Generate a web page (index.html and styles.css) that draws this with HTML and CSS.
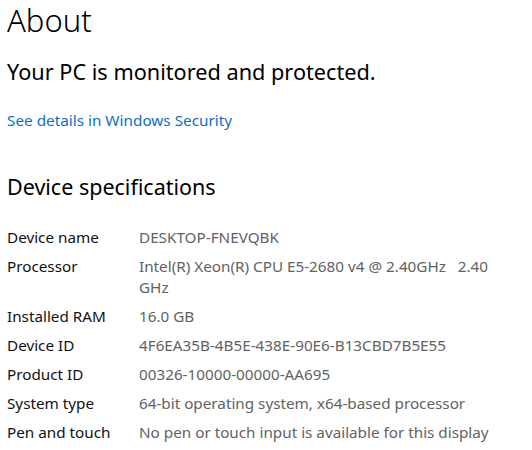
FILE: index.html
```html
<!DOCTYPE html>
<html lang="en">
<head>
<meta charset="utf-8">
<title>About</title>
<link rel="stylesheet" href="styles.css">
</head>
<body>
<main class="page">
  <h1 class="title">About</h1>
  <p class="status">Your PC is monitored and protected.</p>
  <a class="link" href="#">See details in Windows Security</a>
  <h2 class="section">Device specifications</h2>
  <dl class="specs">
    <dt>Device name</dt><dd>DESKTOP-FNEVQBK</dd>
    <dt>Processor</dt><dd class="pre">Intel(R) Xeon(R) CPU E5-2680 v4 @ 2.40GHz   2.40 GHz</dd>
    <dt>Installed RAM</dt><dd>16.0 GB</dd>
    <dt>Device ID</dt><dd>4F6EA35B-4B5E-438E-90E6-B13CBD7B5E55</dd>
    <dt>Product ID</dt><dd>00326-10000-00000-AA695</dd>
    <dt>System type</dt><dd>64-bit operating system, x64-based processor</dd>
    <dt>Pen and touch</dt><dd>No pen or touch input is available for this display</dd>
  </dl>
</main>
</body>
</html>
```

FILE: styles.css
```css
html, body {
  margin: 0;
  padding: 0;
  background: #ffffff;
}
body {
  font-family: "Noto Sans", "Open Sans", sans-serif;
  color: #000000;
}
.page {
  padding: 0 0 0 7px;
  width: 500px;
  display: flex;
  flex-direction: column;
  align-items: flex-start;
}
.title {
  margin: 0;
  font-size: 31px;
  font-weight: 300;
  line-height: 40px;
}
.status {
  margin: 18px 0 0 0;
  font-size: 21.7px;
  font-weight: 400;
  line-height: 28px;
}
.link {
  margin-top: 24px;
  font-size: 15.3px;
  line-height: 20px;
  color: #0a6fc6;
  text-decoration: none;
}
.section {
  margin: 43px 0 0 0;
  font-size: 21.5px;
  font-weight: 400;
  line-height: 28px;
}
.specs {
  margin: 26px 0 0 0;
  display: grid;
  grid-template-columns: 132px 362px;
  row-gap: 8px;
  font-size: 15.25px;
  line-height: 21px;
}
.specs dt {
  color: #111111;
}
.specs dd {
  margin: 0;
  color: #626262;
}
.specs .pre {
  white-space: pre-wrap;
}
```
